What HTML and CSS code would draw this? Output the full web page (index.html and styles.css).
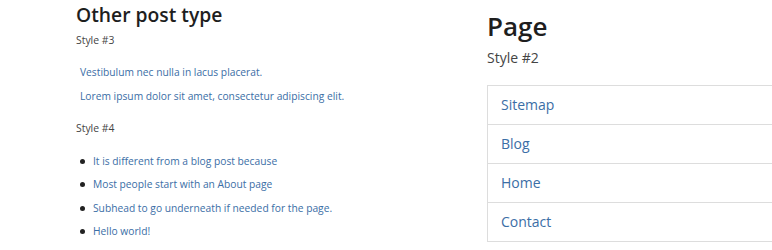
FILE: index.html
```html
<!DOCTYPE html>
<html lang="en">
<head>
<meta charset="UTF-8" />
<meta name="viewport" content="width=device-width, initial-scale=1.0" />
<title>Post types</title>
<link rel="stylesheet" href="styles.css">
</head>
<body>
<div class="wrap">
  <div class="col left">
    <h2 class="title">Other post type</h2>
    <p class="style-label">Style #3</p>
    <ul class="plain-links">
      <li><a href="#">Vestibulum nec nulla in lacus placerat.</a></li>
      <li><a href="#">Lorem ipsum dolor sit amet, consectetur adipiscing elit.</a></li>
    </ul>
    <p class="style-label second">Style #4</p>
    <ul class="bullet-links">
      <li><a href="#">It is different from a blog post because</a></li>
      <li><a href="#">Most people start with an About page</a></li>
      <li><a href="#">Subhead to go underneath if needed for the page.</a></li>
      <li><a href="#">Hello world!</a></li>
    </ul>
  </div>
  <div class="col right">
    <h1 class="page-title">Page</h1>
    <p class="page-style">Style #2</p>
    <ul class="boxed-links">
      <li><a href="#">Sitemap</a></li>
      <li><a href="#">Blog</a></li>
      <li><a href="#">Home</a></li>
      <li><a href="#">Contact</a></li>
    </ul>
  </div>
</div>
</body>
</html>
```

FILE: styles.css
```css
body {
  margin: 0;
  background: #fff;
  font-family: "Open Sans", "Noto Sans", sans-serif;
  color: #333;
}
a {
  color: #3b6ea6;
  text-decoration: none;
}
ul {
  list-style: none;
  margin: 0;
  padding: 0;
}
.wrap {
  display: grid;
  grid-template-columns: 411px 1fr;
  padding-left: 76px;
  height: 250px;
  overflow: hidden;
}
.right {
  overflow: hidden;
}
.title {
  margin: 2px 0 0;
  font-size: 19.3px;
  line-height: 26px;
  font-weight: 600;
  color: #1e1e1e;
}
.style-label {
  margin: 4px 0 0;
  font-size: 10.4px;
  line-height: 16px;
  color: #444;
}
.style-label.second {
  margin-top: 12px;
}
.plain-links {
  margin-top: 12px;
  padding-left: 4px;
  font-size: 10.25px;
  line-height: 24px;
}
.bullet-links {
  margin-top: 14px;
  padding-left: 4px;
  font-size: 10.25px;
  line-height: 23.3px;
}
.bullet-links li {
  display: flex;
  align-items: center;
  gap: 8px;
}
.bullet-links li::before {
  content: "";
  width: 5px;
  height: 5px;
  border-radius: 50%;
  background: #222;
}
.page-title {
  margin: 9px 0 0;
  font-size: 26px;
  line-height: 34px;
  font-weight: 600;
  color: #1e1e1e;
}
.page-style {
  margin: 5px 0 0;
  font-size: 14px;
  line-height: 20px;
  color: #444;
}
.boxed-links {
  margin-top: 17px;
  border: 1px solid #ddd;
  width: 400px;
  font-size: 14px;
  line-height: 20px;
}
.boxed-links li {
  padding: 9px 13px;
  border-top: 1px solid #ddd;
}
.boxed-links li:first-child {
  border-top: none;
}
```
